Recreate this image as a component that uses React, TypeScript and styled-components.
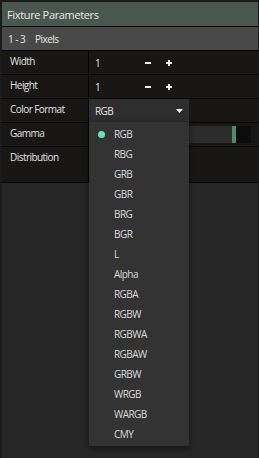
import React from "react";
import styled, { createGlobalStyle } from "styled-components";

const Global = createGlobalStyle`
  html, body { margin: 0; padding: 0; background: #1b1b1b; }
  * { box-sizing: border-box; }
`;

const Panel = styled.div`
  width: 259px;
  height: 458px;
  padding: 2px 1px 0 2px;
  background: #1b1b1b;
  font-family: "Open Sans", "Noto Sans", sans-serif;
  font-size: 10px;
  letter-spacing: -0.55px;
  color: #e2e2e2;
`;

const Inner = styled.div`
  height: 456px;
  background: #272727;
  display: flex;
  flex-direction: column;
`;

const Title = styled.div`
  height: 25px;
  flex: none;
  display: flex;
  align-items: center;
  padding-left: 5px;
  background: #4a5650;
  border-bottom: 1px solid #050505;
  font-size: 11px;
  letter-spacing: -0.35px;
  color: #e8e8e8;
`;

const SubTitle = styled.div`
  height: 24px;
  flex: none;
  display: flex;
  align-items: center;
  gap: 10px;
  padding-left: 6px;
  background: #494949;
  border-bottom: 1px solid #050505;
  color: #e8e8e8;
`;

const Row = styled.div<{ $h?: number }>`
  height: ${(p) => p.$h ?? 24}px;
  flex: none;
  display: grid;
  grid-template-columns: 87px 1fr;
  background: #181715;
  border-bottom: 1px solid #050505;
`;

const Label = styled.div`
  display: flex;
  align-items: flex-start;
  padding: 4px 0 0 8px;
  border-right: 1px solid #050505;
  line-height: 13px;
`;

const Value = styled.div`
  position: relative;
  display: flex;
  align-items: center;
  padding-left: 6px;
  height: 23px;
`;

const Num = styled.span`
  width: 50px;
`;

const StepIcon = styled.svg`
  width: 6px;
  height: 6px;
  margin-right: 15px;
`;

const Select = styled.div`
  width: 100px;
  height: 23px;
  margin-left: -6px;
  padding: 0 6px;
  background: #2e2e2e;
  display: flex;
  align-items: center;
  justify-content: space-between;
  position: relative;
`;

const Caret = styled.svg`
  width: 7px;
  height: 4px;
`;

const Menu = styled.div`
  position: absolute;
  top: 23px;
  left: 0;
  width: 100px;
  padding: 2px 0;
  background: #333333;
  border-radius: 0 0 2px 2px;
  box-shadow: 0 2px 6px rgba(0, 0, 0, 0.55);
  z-index: 5;
`;

const Item = styled.div`
  height: 20px;
  display: flex;
  align-items: center;
  padding-left: 25px;
  position: relative;
  color: #dcdcdc;
`;

const Dot = styled.span`
  position: absolute;
  left: 9px;
  top: 7px;
  width: 7px;
  height: 7px;
  border-radius: 50%;
  background: #62e6b8;
`;

const Track = styled.div`
  position: absolute;
  left: 6px;
  right: 7px;
  top: 3px;
  height: 17px;
  background: #0c0c0c;
  display: flex;
`;

const Fill = styled.div`
  width: 137px;
  background: #2c2c2c;
`;

const Handle = styled.div`
  width: 4px;
  background: #4b8c70;
`;

const formats = [
  "RGB", "RBG", "GRB", "GBR", "BRG", "BGR", "L", "Alpha", "RGBA", "RGBW",
  "RGBWA", "RGBAW", "GRBW", "WRGB", "WARGB", "CMY",
];

const Minus = () => (
  <StepIcon viewBox="0 0 6 6">
    <rect x="0" y="2" width="6" height="2" fill="#f2f2f2" />
  </StepIcon>
);

const Plus = () => (
  <StepIcon viewBox="0 0 6 6">
    <rect x="0" y="2" width="6" height="2" fill="#f2f2f2" />
    <rect x="2" y="0" width="2" height="6" fill="#f2f2f2" />
  </StepIcon>
);

const Stepper = ({ label }: { label: string }) => (
  <Row>
    <Label>{label}</Label>
    <Value>
      <Num>1</Num>
      <Minus />
      <Plus />
    </Value>
  </Row>
);

export default function App() {
  return (
    <>
      <Global />
      <Panel>
        <Inner>
          <Title>Fixture Parameters</Title>
          <SubTitle>
            <span>1 - 3</span>
            <span>Pixels</span>
          </SubTitle>
          <Stepper label="Width" />
          <Stepper label="Height" />
          <Row>
            <Label>Color Format</Label>
            <Value>
              <Select>
                <span>RGB</span>
                <Caret viewBox="0 0 7 4">
                  <path d="M0 0 H7 L3.5 4 Z" fill="#f0f0f0" />
                </Caret>
                <Menu>
                  {formats.map((f, i) => (
                    <Item key={f}>
                      {i === 0 && <Dot />}
                      {f}
                    </Item>
                  ))}
                </Menu>
              </Select>
            </Value>
          </Row>
          <Row>
            <Label>Gamma</Label>
            <Value>
              <Track>
                <Fill />
                <Handle />
              </Track>
            </Value>
          </Row>
          <Row $h={36}>
            <Label>Distribution</Label>
            <Value />
          </Row>
        </Inner>
      </Panel>
    </>
  );
}
